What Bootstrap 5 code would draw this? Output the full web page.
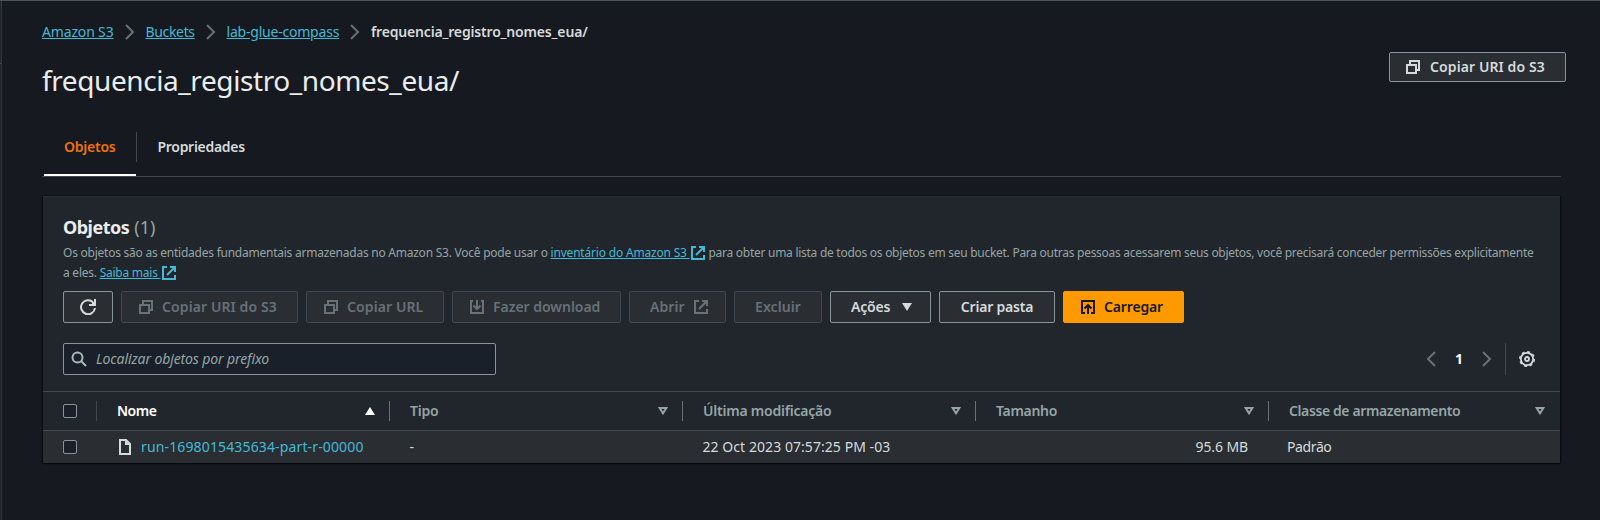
<!DOCTYPE html>
<html lang="pt-BR">
<head>
<meta charset="utf-8">
<meta name="viewport" content="width=device-width, initial-scale=1">
<title>Amazon S3 - frequencia_registro_nomes_eua/</title>
<link rel="stylesheet" href="https://cdn.jsdelivr.net/npm/bootstrap@5.3.0/dist/css/bootstrap.min.css">
<style>
:root{--teal:#44b9d6;--txt:#d5dbdb;--muted:#95a5a6;--line:#414750;--panel:#21252c}
body{background:#16191f;color:var(--txt);font:400 14px/22px "Noto Sans","Open Sans",sans-serif;height:520px;overflow:hidden}
.shell{height:520px;border-top:1px solid #4a5560}
.rail{width:2px;background:#22262b;border-right:1px solid #30353a}
.rail div{height:63px;border-bottom:1px solid #4a5560}
.page-main{padding:20px 34px 0 40px}
a{color:var(--teal)}
svg{display:block;flex:none;fill:none;stroke:currentColor;stroke-width:2}
.crumbs{height:22px}
.crumbs svg{width:10px;margin:0 11px 0 11px;color:#687078}
.crumbs a,.crumbs span{white-space:nowrap}
.c1{width:71.5px;letter-spacing:-.16px}.c2{width:49px;letter-spacing:-.34px}.c3{width:112.5px;letter-spacing:-.21px}.c4{letter-spacing:-.17px}
h1{font-size:28px;line-height:36px;letter-spacing:-.41px;color:#eaeded;font-weight:400;margin:0;padding-top:19px}
.title-row{height:76px}
.act{height:32px;border:1px solid #879596;border-radius:2px;background:#2a2e33;color:var(--txt);font-weight:600;font-size:14px;line-height:20px;padding:0 0 0 16px;display:flex;align-items:center;gap:8px;white-space:nowrap;letter-spacing:.1px;text-align:left}
.act:disabled{border-color:#414750;background:#2a2e33;color:#687078;opacity:1}
.act.mid{justify-content:center;padding:0}
.act.top-copy{width:177px;height:30px;padding-left:15px;gap:9px;margin-top:9px}
.act.primary{background:#f90;border-color:#f90;color:#16191f;letter-spacing:-.15px}
.act.tight{letter-spacing:-.2px}
.act.w169{letter-spacing:-.02px}
.tabs-bar{height:56px;border-bottom:1px solid var(--line);width:1519px;margin-top:2px}
.tab-item{font-weight:600;line-height:22px;padding:15px 0 0 20.5px}
.tab-on{width:92px;margin-left:2px;color:#ec7211;border-bottom:2px solid #fff;height:55px;letter-spacing:-.24px;padding-left:20px}
.tab-sep{width:1px;height:30px;background:var(--line);margin-top:11px}
.panel{width:1517px;margin:19px 0 0 1px;height:267px;background:var(--panel);box-shadow:0 1px 1px #0a0b0e,1px 0 1px #0a0b0e,-1px 0 1px #0a0b0e;border-top:1px solid #2a2e33}
.panel-top{padding:18px 20px 0;height:194px}
h2{font-size:18px;line-height:24px;margin:0;font-weight:700;color:#eaeded;letter-spacing:-.52px}
h2 span{color:var(--muted);font-weight:400;letter-spacing:0;margin-left:1px}
.desc{font-size:12px;line-height:20px;color:var(--muted);white-space:nowrap;margin:4px 0 0}
.desc svg{display:inline-block;vertical-align:-4px;width:16px;height:16px;color:var(--teal)}
.d1{letter-spacing:-.242px}.d2{letter-spacing:-.19px}.d3{letter-spacing:-.272px}
.w50{width:50px}.w177{width:177px}.w138{width:138px}.w169{width:169px}.w97{width:97px}.w88{width:88px}.w101{width:101px}.w116{width:116px}.w121{width:121px}
.toolbar{margin-top:8px}
.filter-row{margin-top:20px}
.find{width:433px;height:32px;border:1px solid #879596;border-radius:2px;background:#1a2029;padding-left:7px}
.find svg{color:#aab7b8}
.find input{all:unset;flex:1;margin-left:9px;font-style:italic;letter-spacing:-.11px;color:var(--txt);height:28px;margin-top:-1px}
.find input::placeholder{color:var(--muted);opacity:1}
.pager{color:#687078;height:32px}
.pager b{color:#fff;font-weight:700;margin:0 19px}
.pager .bar{width:1px;height:32px;background:var(--line);margin:0 13px}
.gear{margin-right:5px;stroke-width:1.800;color:var(--txt)}
.grid{table-layout:fixed;width:1517px;margin:0;border-collapse:separate;border-spacing:0}
.grid th,.grid td{padding:0;border-top:1px solid var(--line);vertical-align:middle}
.grid th{height:39px;color:var(--muted);font-weight:600}
.grid td{height:33px;background:#2a2e33}
.grid th>div{height:20px;border-left:1px solid #687078;padding:0 14px 0 20px}
.grid th:last-child>div{padding-right:15px}
.grid th.n>div{border-left-color:#414750;color:#fff}
.tick{appearance:none;width:14px;height:14px;margin:0 0 0 20px;display:block;border:1px solid #879596;border-radius:2px;background:#1a2029}
.k1{letter-spacing:-.5px}.k3{letter-spacing:-.22px}.k4{letter-spacing:-.3px}.k5{letter-spacing:-.39px}
.sort{width:10px;height:8px}
.file-cell{padding-left:22px}
.file-name{margin-left:9px;letter-spacing:.14px}
.grid td.cell-pad{padding-left:20.5px}
.grid td.date-cell{letter-spacing:.06px}
.grid td.class-cell{padding-left:19px}
.grid td.size-cell{padding-right:20px;letter-spacing:-.1px}
</style>
</head>
<body>
<svg class="d-none">
<symbol id="copy" viewBox="0 0 16 16"><path d="M2 6h9v8H2zM5 6V2h9v9h-3"/></symbol>
<symbol id="ext" viewBox="0 0 16 16"><path d="M6 2H2v12h12v-4M9 2h5v5M14 2 6 10"/></symbol>
<symbol id="down" viewBox="0 0 16 16"><path d="M4 2H2v12h12V2h-2M8 1v9M4.500 6.500 8 10l3.500-3.500"/></symbol>
<symbol id="up" viewBox="0 0 16 16"><path d="M5 14H2V2h12v12h-3M8 15V6M4.500 9.500 8 6l3.500 3.500"/></symbol>
<symbol id="right" viewBox="0 0 10 16"><path d="m1 1 7 7-7 7"/></symbol>
<symbol id="left" viewBox="0 0 10 16"><path d="M9 1 2 8l7 7"/></symbol>
<symbol id="sort" viewBox="0 0 10 8"><path d="M1.600 1h6.800L5 6.300z"/></symbol>
</svg>
<div class="shell d-flex">
<aside class="rail"><div></div></aside>
<main class="page-main flex-grow-1">
<nav class="crumbs d-flex align-items-center">
<a class="c1" href="#">Amazon S3</a><svg height="16"><use href="#right"/></svg>
<a class="c2" href="#">Buckets</a><svg height="16"><use href="#right"/></svg>
<a class="c3" href="#">lab-glue-compass</a><svg height="16"><use href="#right"/></svg>
<span class="c4 fw-semibold">frequencia_registro_nomes_eua/</span>
</nav>
<div class="title-row d-flex justify-content-between align-items-start">
<h1>frequencia_registro_nomes_eua/</h1>
<button class="act top-copy"><svg width="16" height="16"><use href="#copy"/></svg>Copiar URI do S3</button>
</div>
<div class="tabs-bar d-flex">
<div class="tab-item tab-on">Objetos</div><div class="tab-sep"></div><div class="tab-item k4">Propriedades</div>
</div>
<section class="panel">
<div class="panel-top">
<h2>Objetos <span>(1)</span></h2>
<p class="desc"><span class="d1">Os objetos são as entidades fundamentais armazenadas no Amazon S3. Você pode usar o </span><a class="d2" href="#">inventário do Amazon S3 <svg><use href="#ext"/></svg></a><span class="d3"> para obter uma lista de todos os objetos em seu bucket. Para outras pessoas acessarem seus objetos, você precisará conceder permissões explicitamente</span><br><span class="d1">a eles. <a href="#">Saiba mais <svg><use href="#ext"/></svg></a></span></p>
<div class="d-flex gap-2 toolbar">
<button class="act mid w50" aria-label="Atualizar"><svg width="16" height="16"><path d="M15 9A7 7 0 1 1 13 3.200"/><path fill="currentColor" stroke="none" d="M16 0v7H9V5h3V3h2V0z"/></svg></button>
<button class="act w177" disabled><svg width="16" height="16"><use href="#copy"/></svg>Copiar URI do S3</button>
<button class="act w138" disabled><svg width="16" height="16"><use href="#copy"/></svg>Copiar URL</button>
<button class="act w169" disabled><svg width="16" height="16"><use href="#down"/></svg>Fazer download</button>
<button class="act w97 ps-3" disabled><span class="ms-1">Abrir</span><svg width="16" height="16"><use href="#ext"/></svg></button>
<button class="act mid w88" disabled>Excluir</button>
<button class="act w101 tight ps-3"><span class="ms-1">Ações</span><svg class="ms-1" width="10" height="8"><path fill="currentColor" stroke="none" d="M0 0h10L5 8z"/></svg></button>
<button class="act mid w116 tight">Criar pasta</button>
<button class="act primary w121"><svg width="16" height="16"><use href="#up"/></svg>Carregar</button>
</div>
<div class="d-flex justify-content-between filter-row">
<div class="find d-flex align-items-center"><svg width="16" height="16"><circle cx="6.500" cy="6.500" r="5"/><path d="m10 10 5 5"/></svg><input placeholder="Localizar objetos por prefixo"></div>
<div class="pager d-flex align-items-center"><svg width="10" height="16"><use href="#left"/></svg><b>1</b><svg width="10" height="16"><use href="#right"/></svg><span class="bar"></span>
<svg class="gear" width="16" height="16"><circle cx="8" cy="8" r="6.200"/><circle cx="8" cy="8" r="7.300" stroke-width="1.400" stroke-dasharray="3 2.733"/><circle cx="8" cy="8" r="2"/></svg></div>
</div>
</div>
<table class="grid">
<colgroup><col width="53"><col width="293"><col width="293"><col width="293"><col width="293"><col></colgroup>
<tr>
<th><input class="tick" type="checkbox" aria-label="Selecionar tudo"></th>
<th class="n"><div class="d-flex align-items-center justify-content-between"><span class="k1">Nome</span><svg class="sort"><path fill="currentColor" stroke="none" d="M0 8h10L5 0z"/></svg></div></th>
<th><div class="d-flex align-items-center justify-content-between"><span class="k3">Tipo</span><svg class="sort"><use href="#sort"/></svg></div></th>
<th><div class="d-flex align-items-center justify-content-between"><span class="k3">Última modificação</span><svg class="sort"><use href="#sort"/></svg></div></th>
<th><div class="d-flex align-items-center justify-content-between"><span class="k4">Tamanho</span><svg class="sort"><use href="#sort"/></svg></div></th>
<th><div class="d-flex align-items-center justify-content-between"><span class="k5">Classe de armazenamento</span><svg class="sort"><use href="#sort"/></svg></div></th>
</tr>
<tr>
<td><input class="tick" type="checkbox" aria-label="Selecionar"></td>
<td><div class="d-flex align-items-center file-cell"><svg width="14" height="16"><path d="M2 1h6l4 4v10H2zM8 1v4h4"/></svg><a class="text-decoration-none file-name" href="#">run-1698015435634-part-r-00000</a></div></td>
<td class="cell-pad">-</td><td class="cell-pad date-cell">22 Oct 2023 07:57:25 PM -03</td><td class="text-end size-cell">95.6 MB</td><td class="class-cell k5">Padrão</td>
</tr>
</table>
</section>
</main>
</div>
<script src="https://cdn.jsdelivr.net/npm/bootstrap@5.3.0/dist/js/bootstrap.bundle.min.js"></script>
</body>
</html>
